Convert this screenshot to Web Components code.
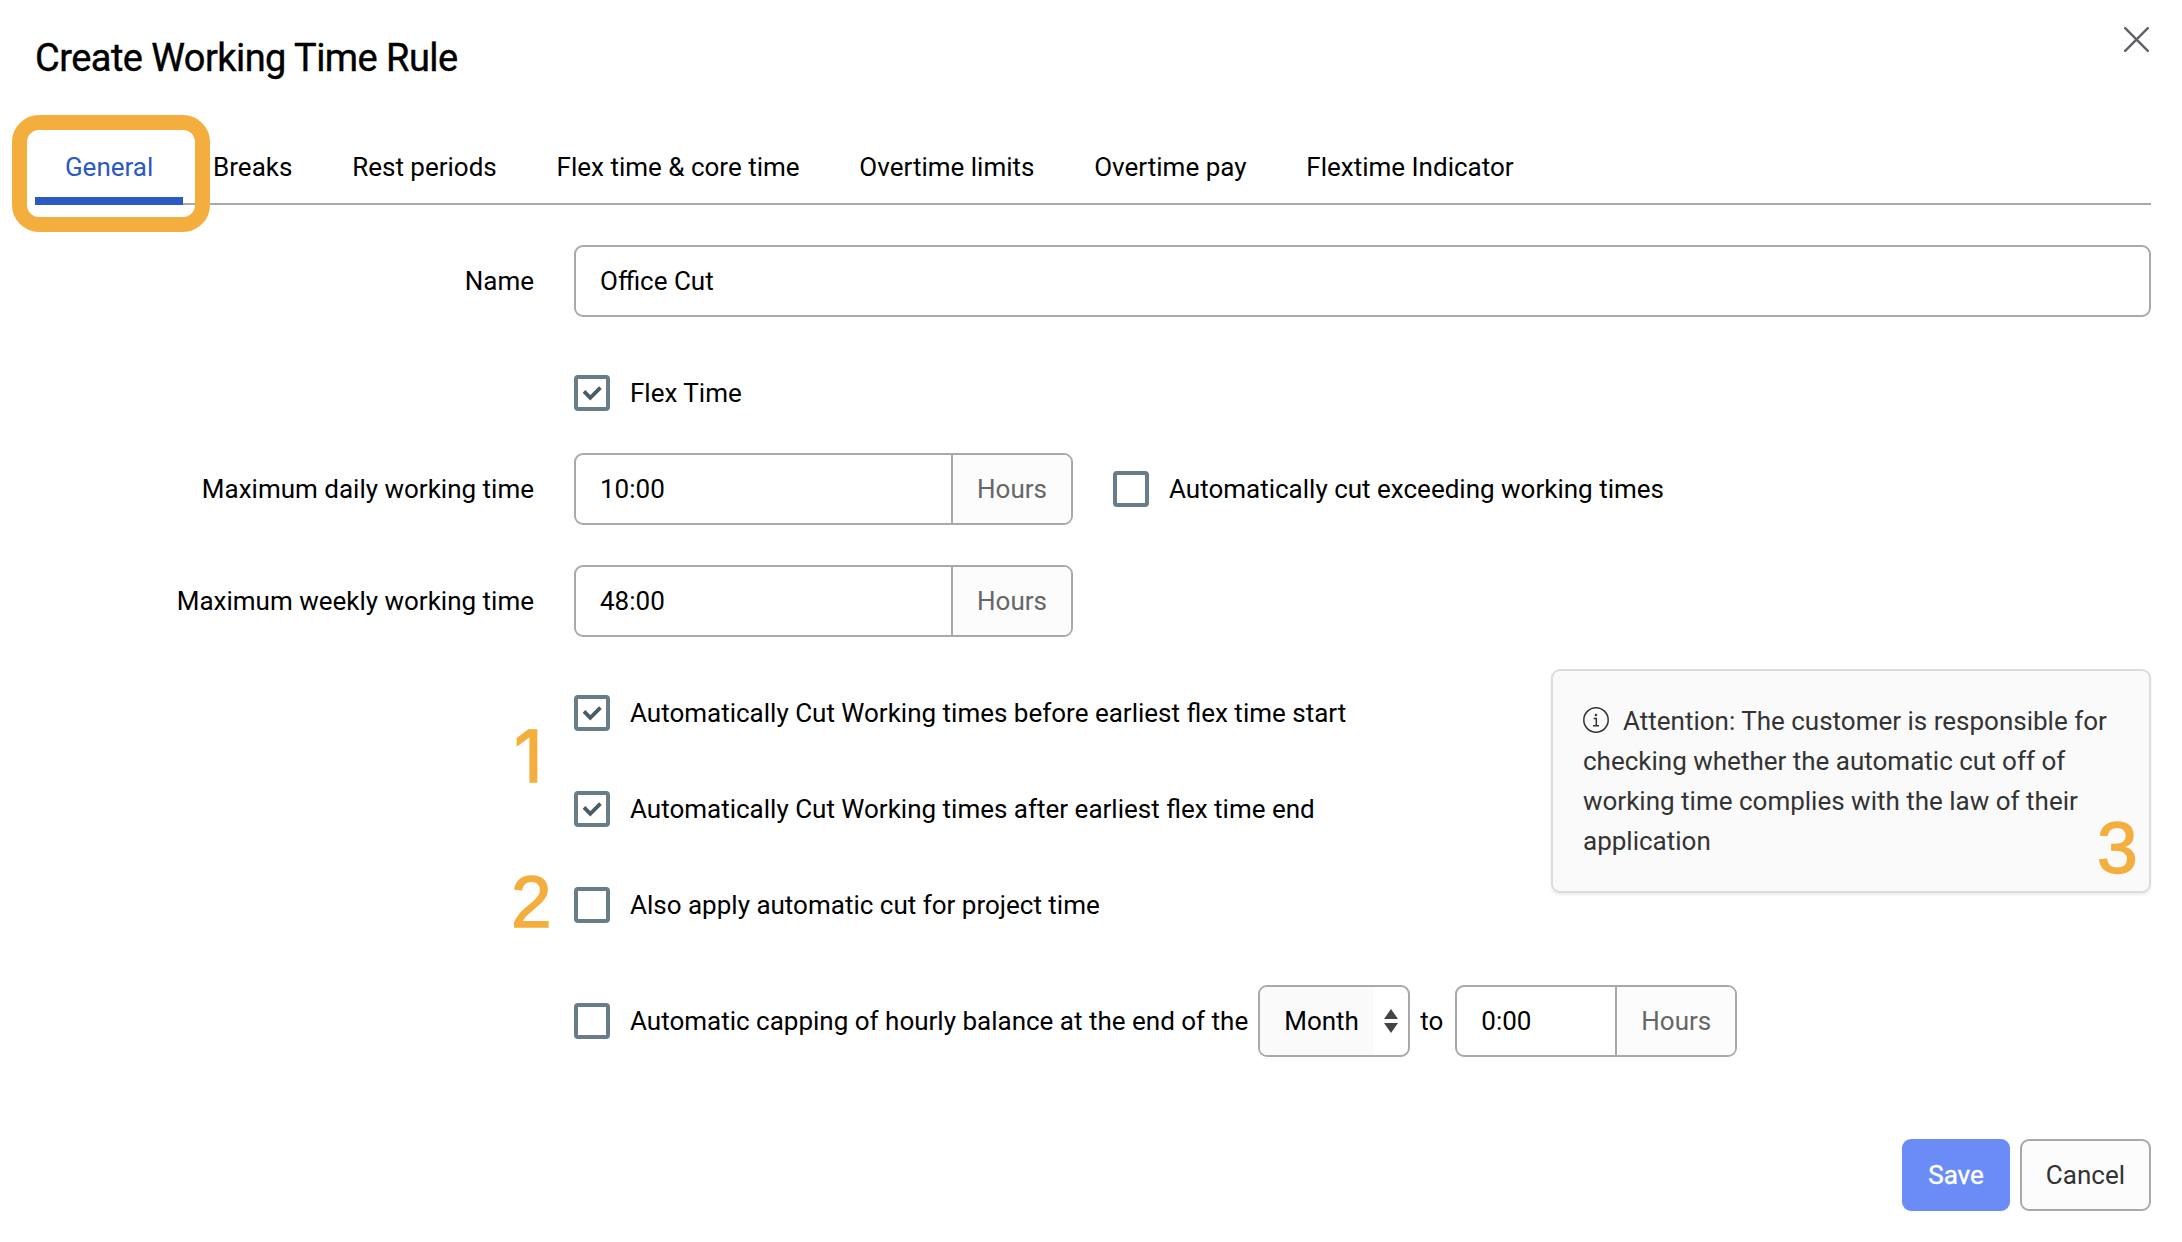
<!DOCTYPE html>
<html lang="en">
<head>
<meta charset="utf-8">
<title>Create Working Time Rule</title>
<style>
  body {
    margin: 0;
    background: #fff;
    color: #000;
    font: 26px/40px Roboto, sans-serif;
  }
</style>
</head>
<body>
<rule-dialog></rule-dialog>

<script>
class TabItem extends HTMLElement {
  constructor() {
    super();
    this.attachShadow({ mode: "open" }).innerHTML = /* html */`
    <style>
      :host {
        display: block;
        box-sizing: border-box;
        height: 76px;
        padding: 18px 29.9px 0;
        white-space: nowrap;
      }
      :host([active]) {
        color: #2a59c3;
        border-bottom: 8px solid #2a59c3;
      }
    </style>
    <slot></slot>`;
  }
}

class CheckBox extends HTMLElement {
  constructor() {
    super();
    this.attachShadow({ mode: "open" }).innerHTML = /* html */`
    <style>
      :host {
        display: flex;
        align-items: center;
        gap: 20px;
        height: 72px;
        white-space: nowrap;
      }
      .box {
        box-sizing: border-box;
        width: 36px;
        height: 36px;
        border: 4px solid #687d89;
        border-radius: 4px;
        background: #fff;
        flex: none;
      }
      svg { display: none; }
      :host([checked]) svg { display: block; }
    </style>
    <div class="box">
      <svg width="28" height="28" viewBox="0 0 28 28" fill="none" stroke="#4a5b66" stroke-width="3.8">
        <path d="M6 12.4l6.3 6.4L22.4 8.6"/>
      </svg>
    </div>
    <span><slot></slot></span>`;
  }
}

class TextField extends HTMLElement {
  connectedCallback() {
    const unit = this.getAttribute("unit");
    this.attachShadow({ mode: "open" }).innerHTML = /* html */`
    <style>
      :host {
        display: flex;
        box-sizing: border-box;
        height: 72px;
        line-height: 68px;
        border: 2px solid #a9a9a9;
        border-radius: 9px;
        background: #fff;
        overflow: hidden;
      }
      .value { flex: 1; padding-left: 24px; }
      .unit {
        box-sizing: border-box;
        width: 120px;
        padding-left: 24px;
        border-left: 2px solid #a9a9a9;
        background: #fcfcfc;
        color: #666;
      }
    </style>
    <div class="value"><slot></slot></div>
    ${unit ? `<div class="unit">${unit}</div>` : ""}`;
  }
}

class SelectField extends HTMLElement {
  constructor() {
    super();
    this.attachShadow({ mode: "open" }).innerHTML = /* html */`
    <style>
      :host {
        display: flex;
        box-sizing: border-box;
        width: 152px;
        height: 72px;
        line-height: 68px;
        border: 2px solid #a9a9a9;
        border-radius: 9px;
        overflow: hidden;
      }
      .value {
        width: 114px;
        box-sizing: border-box;
        padding-left: 24px;
        background: #fafafa;
      }
      .arrows {
        flex: 1;
        display: grid;
        place-items: center;
      }
      svg { display: block; }
    </style>
    <div class="value"><slot></slot></div>
    <div class="arrows">
      <svg width="14" height="24" viewBox="0 0 14 24" fill="#444">
        <path d="M7 0l7 10H0zM7 24l7-10H0z"/>
      </svg>
    </div>`;
  }
}

class FormRow extends HTMLElement {
  connectedCallback() {
    this.attachShadow({ mode: "open" }).innerHTML = /* html */`
    <style>
      :host {
        display: grid;
        grid-template-columns: 499px 1fr;
        column-gap: 40px;
        line-height: 72px;
      }
      .label { text-align: right; }
      .content { display: flex; }
    </style>
    <div class="label">${this.getAttribute("label") || ""}</div>
    <div class="content"><slot></slot></div>`;
  }
}

class InfoBox extends HTMLElement {
  constructor() {
    super();
    this.attachShadow({ mode: "open" }).innerHTML = /* html */`
    <style>
      :host {
        display: block;
        box-sizing: border-box;
        width: 600px;
        height: 224px;
        padding: 30px;
        border: 2px solid #dcdcdc;
        border-radius: 9px;
        background: #fafafa;
        box-shadow: 0 2px 3px rgba(0, 0, 0, .08);
        color: #333;
        line-height: 40px;
      }
      svg { vertical-align: -3px; margin-right: 14px; }
    </style>
    <svg width="26" height="26" viewBox="0 0 26 26" fill="none" stroke="#333" stroke-width="1.5">
      <circle cx="13" cy="13" r="12.2"/>
      <path d="M10.6 11.6h2.7v7.2M10 18.8h6"/>
      <circle cx="12.9" cy="8" r="1.2" fill="#333" stroke="none"/>
    </svg><slot></slot>`;
  }
}

class ActionButton extends HTMLElement {
  constructor() {
    super();
    this.attachShadow({ mode: "open" }).innerHTML = /* html */`
    <style>
      :host {
        box-sizing: border-box;
        display: block;
        height: 72px;
        padding: 0 24px;
        line-height: 68px;
        border: 2px solid #a9a9a9;
        border-radius: 9px;
        background: #fcfcfc;
        color: #333;
      }
      :host([primary]) {
        border-color: #6b8bf7;
        background: #6b8bf7;
        color: #fff;
        -webkit-text-stroke: .4px #fff;
      }
    </style>
    <slot></slot>`;
  }
}

// Orange annotations lie over the form, so they are placed freely
class CalloutMark extends HTMLElement {
  constructor() {
    super();
    this.attachShadow({ mode: "open" }).innerHTML = /* html */`
    <style>
      :host {
        position: absolute;
        color: #f4ae3d;
        font: 73px/60px "Liberation Sans", Arial, sans-serif;
        -webkit-text-stroke: 1.4px #f4ae3d;
      }
      :host([frame]) {
        box-sizing: border-box;
        border: 15px solid #f4ae3d;
        border-radius: 27px;
      }
    </style>
    <slot></slot>`;
  }
}

class RuleDialog extends HTMLElement {
  constructor() {
    super();
    this.attachShadow({ mode: "open" }).innerHTML = /* html */`
    <style>
      :host {
        display: block;
        position: relative;
        box-sizing: border-box;
        width: 2182px;
        height: 1242px;
        padding: 27px 31px 0 35px;
        overflow: hidden;
      }
      header {
        display: flex;
        justify-content: space-between;
        height: 102px;
      }
      h1 {
        margin: 8px 0 0;
        font-size: 38px;
        font-weight: 400;
        line-height: 46px;
        letter-spacing: -0.55px;
        -webkit-text-stroke: .4px #000;
      }
      header svg { margin-right: 2px; }
      nav {
        display: flex;
        box-shadow: inset 0 -2px #a9a9a9;
      }
      form-row { margin-top: 40px; }
      .tight { margin-top: 24px; }
      .wide { flex: 1; }
      .hours { width: 499px; margin-right: 40px; }
      .cuts {
        flex: 1;
        display: flex;
        justify-content: space-between;
        align-items: flex-start;
      }
      .list { display: grid; row-gap: 24px; }
      info-box { margin-top: -8px; }
      .capping { margin-top: 44px; }
      .to { margin: 0 12px 0 10px; }
      .balance { width: 282px; }
      select-field { margin-left: 10px; }
      footer {
        display: flex;
        justify-content: flex-end;
        gap: 10px;
        margin-top: 82px;
      }
      .frame { left: 12px; top: 115px; width: 198px; height: 117px; }
      .one { left: 514px; top: 726px; font-family: Inter, sans-serif; font-size: 71px; }
      .two { left: 511px; top: 872px; }
      .three { left: 2097px; top: 818px; }
    </style>
    <header>
      <h1>Create Working Time Rule</h1>
      <svg width="25" height="25" viewBox="0 0 25 25" stroke="#606165" stroke-width="2.4" stroke-linecap="round">
        <path d="M1.2 1.2l22.6 22.6M23.8 1.2L1.2 23.8"/>
      </svg>
    </header>
    <nav>
      <tab-item active>General</tab-item>
      <tab-item>Breaks</tab-item>
      <tab-item>Rest periods</tab-item>
      <tab-item>Flex time &amp; core time</tab-item>
      <tab-item>Overtime limits</tab-item>
      <tab-item>Overtime pay</tab-item>
      <tab-item>Flextime Indicator</tab-item>
    </nav>
    <form-row label="Name"><text-field class="wide">Office Cut</text-field></form-row>
    <form-row><check-box checked>Flex Time</check-box></form-row>
    <form-row class="tight" label="Maximum daily working time">
      <text-field class="hours" unit="Hours">10:00</text-field>
      <check-box>Automatically cut exceeding working times</check-box>
    </form-row>
    <form-row label="Maximum weekly working time">
      <text-field class="hours" unit="Hours">48:00</text-field>
    </form-row>
    <form-row>
      <div class="cuts">
        <div class="list">
          <check-box checked>Automatically Cut Working times before earliest flex time start</check-box>
          <check-box checked>Automatically Cut Working times after earliest flex time end</check-box>
          <check-box>Also apply automatic cut for project time</check-box>
        </div>
        <info-box>Attention: The customer is responsible for checking whether the automatic cut off of working time complies with the law of their application</info-box>
      </div>
    </form-row>
    <form-row class="capping">
      <check-box>Automatic capping of hourly balance at the end of the</check-box>
      <select-field>Month</select-field>
      <span class="to">to</span>
      <text-field class="balance" unit="Hours">0:00</text-field>
    </form-row>
    <footer>
      <action-button primary>Save</action-button>
      <action-button>Cancel</action-button>
    </footer>
    <callout-mark frame class="frame"></callout-mark>
    <callout-mark class="one">1</callout-mark>
    <callout-mark class="two">2</callout-mark>
    <callout-mark class="three">3</callout-mark>`;
  }
}

customElements.define("tab-item", TabItem);
customElements.define("check-box", CheckBox);
customElements.define("text-field", TextField);
customElements.define("select-field", SelectField);
customElements.define("form-row", FormRow);
customElements.define("info-box", InfoBox);
customElements.define("action-button", ActionButton);
customElements.define("callout-mark", CalloutMark);
customElements.define("rule-dialog", RuleDialog);
</script>
</body>
</html>
